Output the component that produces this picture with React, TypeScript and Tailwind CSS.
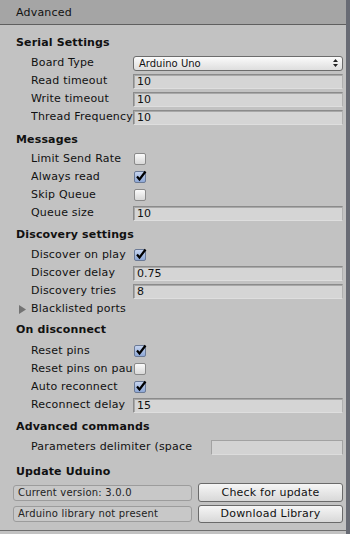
import React from "react";

const font = { fontFamily: '"DejaVu Sans", Verdana, sans-serif' };

function Title({ text, mt, h }: { text: string; mt: string; h: string }) {
  return (
    <div className={`pl-[16px] font-bold text-[11px] leading-[20px] tracking-[0.15px] text-[#111] ${mt} ${h}`}>{text}</div>
  );
}

function Label({ text, w = "w-[102px]" }: { text: string; w?: string }) {
  return <div className={`${w} shrink-0 overflow-hidden whitespace-nowrap text-[11px] tracking-[0.2px] text-[#111]`}>{text}</div>;
}

function Input({ value }: { value: string }) {
  return (
    <div className="flex-1 h-[15px] bg-[#d5d5d5] border border-[#8b8b8b] border-b-[#dedede] border-r-[#b0b0b0] pl-[3px] text-[11px] leading-[13px] text-[#111] shadow-[inset_1px_1px_0_#a8a8a8]">
      {value}
    </div>
  );
}

function Check({ checked }: { checked?: boolean }) {
  return (
    <div className="ml-[1px] w-[12px] h-[12px] rounded-[2px] border border-[#8a8a8a] relative bg-gradient-to-b from-[#fafafa] to-[#d8d8d8]"
      style={checked ? { background: "linear-gradient(#c6d4ef, #8ea8d6)", borderColor: "#6b7a96" } : undefined}>
      {checked && (
        <svg width="12" height="12" viewBox="0 0 12 12" className="absolute left-[0px] top-[-2px]">
          <path d="M2 6.5 L4.5 9.5 L10.5 1.5" fill="none" stroke="#000" strokeWidth="2.2" strokeLinejoin="miter" />
        </svg>
      )}
    </div>
  );
}

function Row({ label, children }: { label: string; children: React.ReactNode }) {
  return (
    <div className="flex items-center h-[18px] pl-[31px] pr-[3px]">
      <Label text={label} />
      {children}
    </div>
  );
}

export default function App() {
  return (
    <div className="w-[350px] h-[534px] bg-[#c2c2c2] flex" style={font}>
      <div className="flex-1 flex flex-col">
        <div className="h-[25px] bg-[#a5a5a5] border-b border-[#5f5f5f] pl-[16px] text-[11px] leading-[25px] tracking-[0.2px] text-[#111]">
          Advanced
        </div>
        <div className="flex-1 flex flex-col">
          <Title text="Serial Settings" mt="mt-[8px]" h="h-[21px]" />
          <Row label="Board Type">
            <div className="flex-1 h-[15px] rounded-[3px] border border-[#6c6c6c] bg-gradient-to-b from-[#fbfbfb] to-[#dedede] flex items-center pl-[5px] pr-[4px] text-[10px] text-[#111]">
              <span className="flex-1">Arduino Uno</span>
              <svg width="5" height="8" viewBox="0 0 5 8">
                <path d="M2.5 0 L5 3 L0 3 Z M0 5 L5 5 L2.5 8 Z" fill="#222" />
              </svg>
            </div>
          </Row>
          <Row label="Read timeout"><Input value="10" /></Row>
          <Row label="Write timeout"><Input value="10" /></Row>
          <Row label="Thread Frequency"><Input value="10" /></Row>

          <Title text="Messages" mt="mt-[4px]" h="h-[20px]" />
          <Row label="Limit Send Rate"><Check /></Row>
          <Row label="Always read"><Check checked /></Row>
          <Row label="Skip Queue"><Check /></Row>
          <Row label="Queue size"><Input value="10" /></Row>

          <Title text="Discovery settings" mt="mt-[3px]" h="h-[21px]" />
          <Row label="Discover on play"><Check checked /></Row>
          <Row label="Discover delay"><Input value="0.75" /></Row>
          <Row label="Discovery tries"><Input value="8" /></Row>
          <div className="flex items-center h-[18px] pl-[19px]">
            <svg width="8" height="9" viewBox="0 0 8 9" className="mr-[4px]">
              <path d="M0 0 L7 4.5 L0 9 Z" fill="#737373" />
            </svg>
            <span className="text-[11px] tracking-[0.2px] text-[#111]">Blacklisted ports</span>
          </div>

          <Title text="On disconnect" mt="mt-[2px]" h="h-[22px]" />
          <Row label="Reset pins"><Check checked /></Row>
          <Row label="Reset pins on pause"><Check /></Row>
          <Row label="Auto reconnect"><Check checked /></Row>
          <Row label="Reconnect delay"><Input value="15" /></Row>

          <Title text="Advanced commands" mt="mt-[3px]" h="h-[21px]" />
          <div className="flex items-center h-[18px] pl-[31px] pr-[3px]">
            <Label text="Parameters delimiter (space)" w="w-[161px]" />
            <div className="w-[19px]" />
            <div className="flex-1 h-[15px] bg-[#d3d3d3] border border-[#a2a2a2] border-b-[#dcdcdc]" />
          </div>

          <Title text="Update Uduino" mt="mt-[6px]" h="h-[20px]" />
          <div className="flex items-center h-[21px] pl-[13px] pr-[3px] gap-[6px]">
            <div className="w-[179px] h-[16px] rounded-[3px] border border-[#9c9c9c] bg-[#c8c8c8] pl-[4px] text-[10px] leading-[14px] tracking-[0.2px] text-[#222]">
              Current version: 3.0.0
            </div>
            <div className="flex-1 h-[19px] rounded-[3px] border border-[#6a6a6a] bg-gradient-to-b from-[#f6f6f6] to-[#d8d8d8] text-center text-[11px] leading-[17px] tracking-[0.2px] text-[#111]">
              Check for update
            </div>
          </div>
          <div className="flex items-center h-[21px] pl-[13px] pr-[3px] gap-[6px]">
            <div className="w-[179px] h-[16px] rounded-[3px] border border-[#9c9c9c] bg-[#c8c8c8] pl-[4px] text-[10px] leading-[14px] tracking-[0.2px] text-[#222]">
              Arduino library not present
            </div>
            <div className="flex-1 h-[18px] rounded-[3px] border border-[#6a6a6a] bg-gradient-to-b from-[#f6f6f6] to-[#d8d8d8] text-center text-[11px] leading-[16px] tracking-[0.2px] text-[#111]">
              Download Library
            </div>
          </div>
        </div>
        <div className="h-[4px] border-t border-[#6e6e6e]" />
      </div>
      <div className="w-[4px] bg-[#686b74]" />
    </div>
  );
}
